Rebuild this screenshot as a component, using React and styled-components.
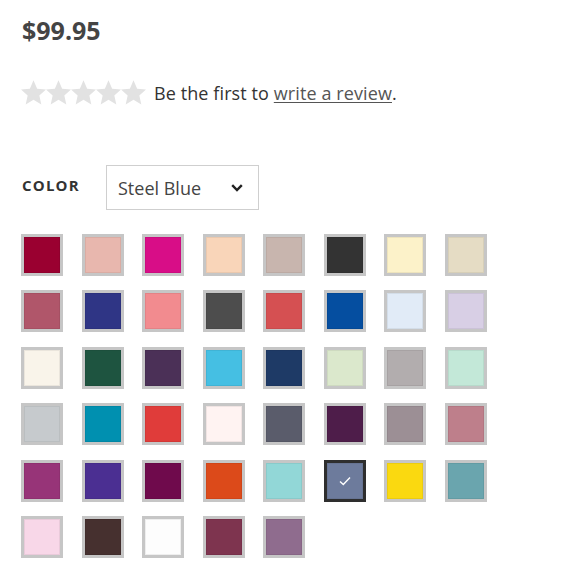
import React from "react";
import styled, { createGlobalStyle } from "styled-components";

const Global = createGlobalStyle`
  html, body { margin: 0; padding: 0; background: #fff; }
  body { font-family: "Open Sans", "Liberation Sans", sans-serif; color: #333; }
`;

const Page = styled.div`
  padding: 14px 0 0 21px;
  width: 580px;
  height: 579px;
  box-sizing: border-box;
  overflow: hidden;
`;

const Price = styled.div`
  font-size: 25px;
  font-weight: 700;
  line-height: 33px;
  color: #444;
  padding-left: 1px;
`;

const RatingRow = styled.div`
  display: flex;
  align-items: center;
  margin-top: 33px;
  height: 25px;
`;

const Stars = styled.div`
  display: flex;
  margin-right: 8px;
`;

const Text = styled.span`
  font-size: 18px;
  letter-spacing: 0.1px;
  line-height: 25px;
  color: #333;
  position: relative;
  top: 1px;
`;

const Link = styled.a`
  color: #555;
  text-decoration: underline;
  text-underline-offset: 2px;
`;

const ColorRow = styled.div`
  display: flex;
  align-items: center;
  margin-top: 60px;
`;

const Label = styled.span`
  font-size: 15px;
  font-weight: 700;
  letter-spacing: 1.2px;
  color: #333;
  width: 84px;
  padding-left: 1px;
  position: relative;
  top: -3px;
`;

const Select = styled.div`
  width: 153px;
  height: 45px;
  box-sizing: border-box;
  border: 1px solid #cfcfcf;
  display: flex;
  align-items: center;
  justify-content: space-between;
  padding: 0 15px 0 11px;
  font-size: 18px;
  color: #444;
`;

const Grid = styled.div`
  display: grid;
  grid-template-columns: repeat(8, 42px);
  column-gap: 18.5px;
  row-gap: 14.5px;
  margin-top: 23.5px;
`;

const Swatch = styled.div`
  width: 42px;
  height: 42px;
  box-sizing: border-box;
  border: 3px solid ${(p) => (p.$selected ? "#2e2e2e" : "#c6c6c6")};
  background: ${(p) => p.$color};
  box-shadow: inset 0 0 0 1px rgba(0, 0, 0, 0.06);
  display: flex;
  align-items: center;
  justify-content: center;
`;

const colors = [
  "#9a0030", "#e8b7ae", "#d80d87", "#f9d5b9", "#c8b5ae", "#333333", "#fcf2c9", "#e5dcc4",
  "#b0566a", "#2f3585", "#f28b8f", "#4d4d4d", "#d55052", "#054ea0", "#e1ebf7", "#d8cfe5",
  "#f9f4ea", "#1e5440", "#4b3057", "#45bfe3", "#1e3a66", "#dbe8cc", "#b2adae", "#c3e8d8",
  "#c6cacd", "#0090b0", "#e03c3a", "#fff3f2", "#5a5c6b", "#4e1d4a", "#9c8f95", "#be7f8b",
  "#973478", "#4b2f92", "#6f0a4c", "#dc4a1a", "#92d7d7", "#6d7b9c", "#fad910", "#6aa5ae",
  "#f8d7e8", "#46302f", "#fdfdfd", "#7e344f", "#8f6c8e",
];

const Star = () => (
  <svg width="25" height="25" viewBox="0 0 24 24">
    <path
      fill="#e2e2e2"
      d="M12 0.3l3.5 8 8.5 0.8-6.4 5.7 1.9 8.6L12 18.9l-7.5 4.5 1.9-8.6L0 9.1l8.5-0.8z"
    />
  </svg>
);

export default function App() {
  return (
    <>
      <Global />
      <Page>
        <Price>$99.95</Price>
        <RatingRow>
          <Stars>
            {[0, 1, 2, 3, 4].map((i) => (
              <Star key={i} />
            ))}
          </Stars>
          <Text>
            Be the first to <Link href="#">write a review</Link>.
          </Text>
        </RatingRow>
        <ColorRow>
          <Label>COLOR</Label>
          <Select>
            <span>Steel Blue</span>
            <svg width="12" height="8" viewBox="0 0 12 8">
              <path d="M1.2 1.2L6 6l4.8-4.8" fill="none" stroke="#222" strokeWidth="2.4" />
            </svg>
          </Select>
        </ColorRow>
        <Grid>
          {colors.map((c, i) => (
            <Swatch key={i} $color={c} $selected={i === 37}>
              {i === 37 && (
                <svg width="12" height="10" viewBox="0 0 12 10">
                  <path d="M1 5.5L4.3 8.5 11 1.5" fill="none" stroke="#fff" strokeWidth="1.4" />
                </svg>
              )}
            </Swatch>
          ))}
        </Grid>
      </Page>
    </>
  );
}
